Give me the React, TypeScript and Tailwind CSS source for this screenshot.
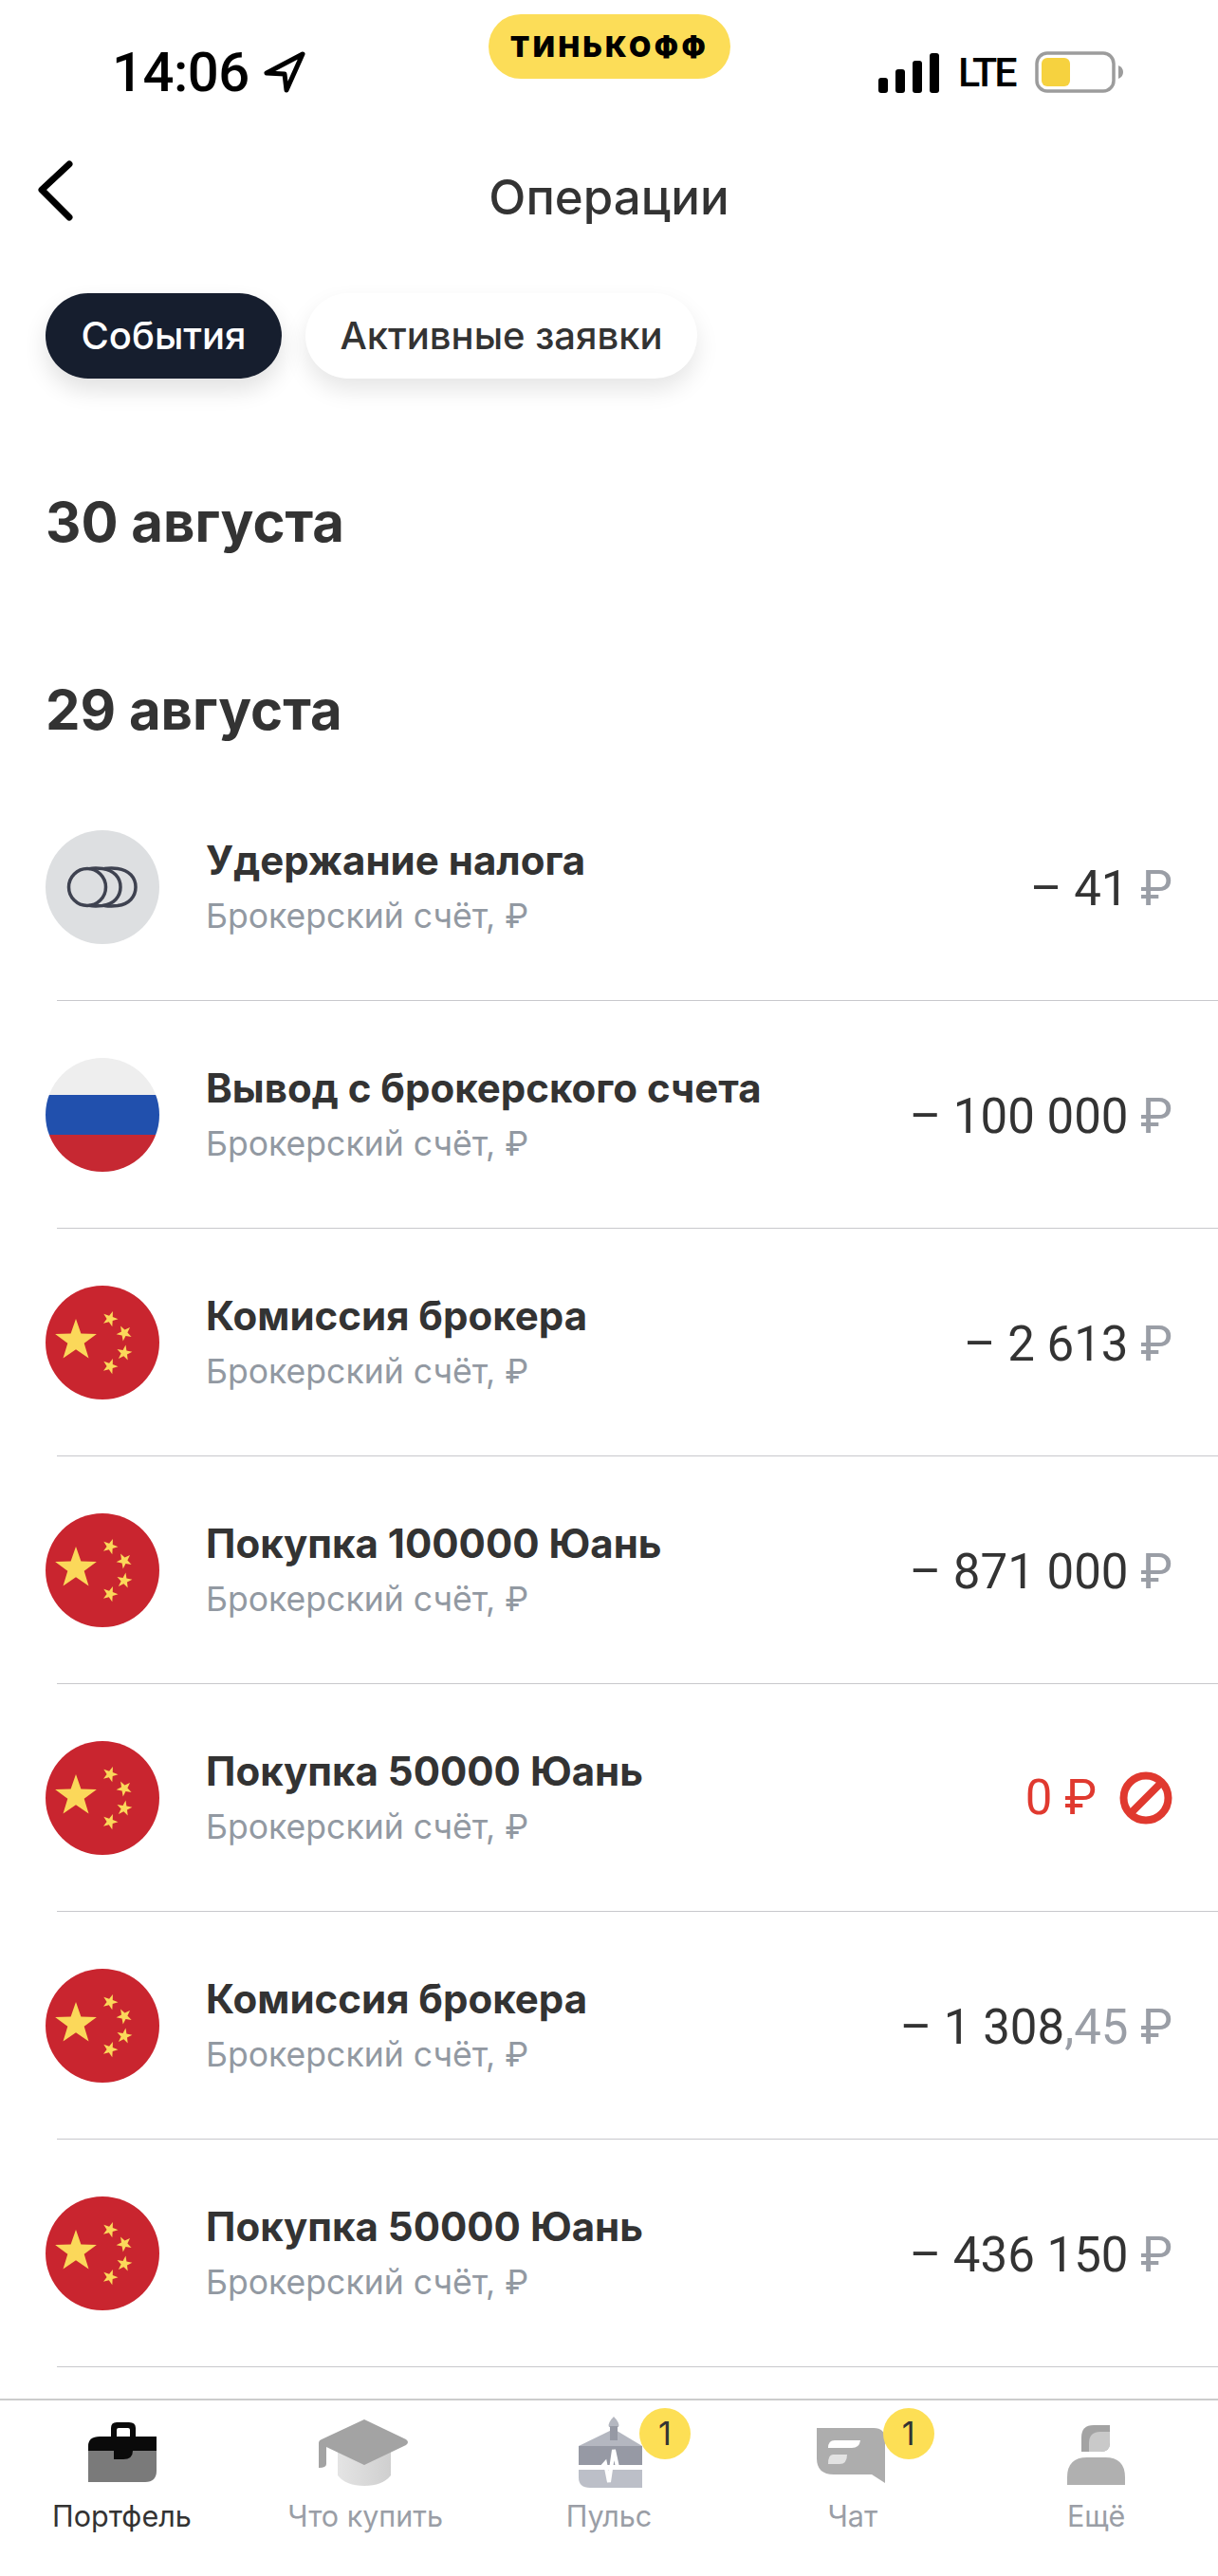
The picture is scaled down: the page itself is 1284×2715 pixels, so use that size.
const stars = (cx: number, cy: number, r: number, rot = 0) => {
  const pts: string[] = [];
  for (let i = 0; i < 10; i++) {
    const rad = i % 2 === 0 ? r : r * 0.4;
    const a = ((-90 + rot + i * 36) * Math.PI) / 180;
    pts.push(`${(cx + rad * Math.cos(a)).toFixed(1)},${(cy + rad * Math.sin(a)).toFixed(1)}`);
  }
  return pts.join(" ");
};

const ChinaFlag = () => (
  <svg width="120" height="120" viewBox="0 0 120 120" className="shrink-0">
    <circle cx="60" cy="60" r="60" fill="#c9252f" />
    <polygon points={stars(32, 58, 23)} fill="#fbd85a" />
    <polygon points={stars(68, 35, 8.5, 20)} fill="#fbd85a" />
    <polygon points={stars(83, 50, 8.5, 45)} fill="#fbd85a" />
    <polygon points={stars(83, 71, 8.5, 10)} fill="#fbd85a" />
    <polygon points={stars(68, 85, 8.5, 20)} fill="#fbd85a" />
  </svg>
);

const RussiaFlag = () => (
  <div className="w-[120px] h-[120px] rounded-full overflow-hidden shrink-0 flex flex-col">
    <div className="h-[39px] bg-[#eeeeee]" />
    <div className="h-[42px] bg-[#2150ad]" />
    <div className="h-[39px] bg-[#c62832]" />
  </div>
);

const CoinsIcon = () => (
  <svg width="120" height="120" viewBox="0 0 120 120" className="shrink-0">
    <circle cx="60" cy="60" r="60" fill="#dddfe1" />
    <g fill="none" stroke="#3e4250" strokeWidth="3.5">
      <circle cx="44" cy="60" r="19.5" />
      <path d="M46 40.6 C50 39.8 56 40 60 40.4 C72 42 79 50 79 60 C79 70 72 78 60 79.6 C56 80 50 80.2 46 79.4" />
      <path d="M62 40.6 C66 40 72 40 76 40.4 C88 42 95 50 95 60 C95 70 88 78 76 79.6 C72 80 66 80 62 79.4" />
    </g>
  </svg>
);

const BanIcon = () => (
  <svg width="56" height="56" viewBox="0 0 56 56" className="ml-[24px]">
    <circle cx="28" cy="28" r="23.5" fill="none" stroke="#e0392f" strokeWidth="8" />
    <path d="M12 44 L44 12" stroke="#e0392f" strokeWidth="8" />
  </svg>
);

const BriefcaseIcon = () => (
  <svg width="100" height="80" viewBox="0 0 100 80">
    <path d="M39 23 V14 Q39 8 45 8 H58 Q65 8 65 14 V23 H59 V16 Q59 14 57 14 H47 Q45 14 45 16 V23 Z" fill="#0a0a0a" />
    <path d="M15 38 V33 Q15 23 27 23 H87 V38 Z" fill="#0a0a0a" />
    <path d="M15 38 H87 V59 Q87 71 75 71 H15 Z" fill="#7a7a7a" />
    <path d="M42 38 H62 Q62 47 52 47 H42 Z" fill="#0a0a0a" />
  </svg>
);

const CapIcon = () => (
  <svg width="100" height="80" viewBox="0 0 100 80">
    <defs>
      <linearGradient id="capHead" x1="0" x2="1" y1="0" y2="0">
        <stop offset="0" stopColor="#e4e4e4" />
        <stop offset="1" stopColor="#cfcfcf" />
      </linearGradient>
    </defs>
    <path d="M21 30 H77 V64 Q68 75 49 75 Q30 75 21 64 Z" fill="url(#capHead)" />
    <path d="M49 5 L93 26 Q97 29 93 32 L49 53 L9 34 V52 Q9 56 1 56 V30 Q1 27 4 26 Z" fill="#a3a3a3" />
  </svg>
);

const PulseIcon = () => (
  <svg width="100" height="80" viewBox="0 0 100 80">
    <path d="M18 33 L55 15 L85 33 Z" fill="#b4b7c0" />
    <path d="M55 2 Q62 9 60 13 H50 Q48 9 55 2 Z" fill="#b4b7c0" />
    <rect x="51" y="12" width="8" height="15" fill="#9699a4" />
    <rect x="18" y="33" width="67" height="20" fill="#9699a4" />
    <path d="M18 58 H85 V77 H30 Q18 77 18 66 Z" fill="#bcbfc8" />
    <path d="M18 55.5 H42 L46 51 L50 71 L55 37 L59 55.5 H85" fill="none" stroke="#ffffff" strokeWidth="4" />
  </svg>
);

const ChatIcon = () => (
  <svg width="100" height="80" viewBox="0 0 100 80">
    <path d="M12 14 H72 Q84 14 84 26 V72 L70 63 H30 Q12 63 12 46 Z" fill="#adadad" />
    <path d="M31 27 H58 Q57 35 49 35 H24 Q24 27 31 27 Z" fill="#ffffff" />
    <path d="M29 42 H44 Q44 52 36 52 H24 Q24 42 29 42 Z" fill="#e2e2e2" />
  </svg>
);

const MoreIcon = () => (
  <svg width="100" height="80" viewBox="0 0 100 80">
    <path d="M64 11 V30 Q64 39 54 39 H34 V24 Q34 11 47 11 Z" fill="#a3a3a3" />
    <path d="M64 18 V30 Q64 39 54 39 H42 V30 Q42 18 54 18 Z" fill="#c9c9c9" />
    <path d="M19 74 V66 Q19 45 40 45 H59 Q80 45 80 66 V74 Z" fill="#b0b0b0" />
  </svg>
);

const Badge = () => (
  <span className="absolute left-[82px] top-[-7px] w-[54px] h-[54px] rounded-full bg-[#fddf55] flex items-center justify-center text-[34px] text-[#333333] leading-none">
    1
  </span>
);

const Rub = () => <span className="text-[#9a9ea6]">₽</span>;

const rows = [
  { title: "Удержание налога", icon: <CoinsIcon />, amount: "– 41" },
  { title: "Вывод с брокерского счета", icon: <RussiaFlag />, amount: "– 100 000" },
  { title: "Комиссия брокера", icon: <ChinaFlag />, amount: "– 2 613" },
  { title: "Покупка 100000 Юань", icon: <ChinaFlag />, amount: "– 871 000" },
  { title: "Покупка 50000 Юань", icon: <ChinaFlag />, amount: "0", failed: true },
  { title: "Комиссия брокера", icon: <ChinaFlag />, amount: "– 1 308", cents: ",45" },
  { title: "Покупка 50000 Юань", icon: <ChinaFlag />, amount: "– 436 150" },
];

const tabs = [
  { label: "Портфель", icon: <BriefcaseIcon />, active: true },
  { label: "Что купить", icon: <CapIcon /> },
  { label: "Пульс", icon: <PulseIcon />, badge: true },
  { label: "Чат", icon: <ChatIcon />, badge: true },
  { label: "Ещё", icon: <MoreIcon /> },
];

export default function App() {
  return (
    <div className="w-[1284px] h-[2715px] bg-white flex flex-col overflow-hidden font-[Inter,sans-serif] text-[#333333]">
      <div className="flex h-[140px] shrink-0 items-start font-[Roboto,sans-serif]">
        <div className="w-[515px] pl-[118px] pt-[45px] flex items-center text-black">
          <span className="text-[58px] font-medium leading-[62px] tracking-[-0.5px]">14:06</span>
          <svg width="46" height="46" viewBox="0 0 46 46" className="ml-[14px]">
            <path d="M42 4 L4 24 L23 25 L25 42 Z" fill="none" stroke="#000000" strokeWidth="5" strokeLinejoin="round" />
          </svg>
        </div>
        <div className="w-[255px] h-[68px] mt-[15px] rounded-[34px] bg-[#fcdd58] flex items-center justify-center">
          <span className="text-[30px] font-black text-black tracking-[3.5px] leading-none font-[Inter,sans-serif]">ТИНЬКОФФ</span>
        </div>
        <div className="flex-1 pl-[156px] pt-[54px] flex items-center">
          <svg width="66" height="44" viewBox="0 0 66 44">
            <rect x="0" y="28" width="10" height="16" rx="3" fill="#000000" />
            <rect x="18" y="19" width="10" height="25" rx="3" fill="#000000" />
            <rect x="36" y="10" width="10" height="34" rx="3" fill="#000000" />
            <rect x="54" y="2" width="10" height="42" rx="3" fill="#000000" />
          </svg>
          <span className="ml-[18px] text-[43px] font-medium text-black tracking-[-3px] leading-none">LTE</span>
          <svg width="96" height="44" viewBox="0 0 96 44" className="ml-[22px]">
            <rect x="2" y="2" width="81" height="40" rx="11" fill="none" stroke="#9c9c9c" strokeWidth="3.5" />
            <rect x="7" y="7" width="30" height="30" rx="6" fill="#f6d23f" />
            <path d="M88 15 Q93 17 93 22 Q93 27 88 29 Z" fill="#9c9c9c" />
          </svg>
        </div>
      </div>

      <div className="grid grid-cols-[1fr_auto_1fr] items-center h-[130px] shrink-0">
        <svg width="80" height="70" viewBox="0 0 80 70" className="ml-[20px] mt-[-6px]">
          <path d="M53 6 L24 33 L53 62" fill="none" stroke="#000000" strokeWidth="7" strokeLinecap="round" strokeLinejoin="round" />
        </svg>
        <h1 className="text-[51px] font-medium leading-none mt-[4px]">Операции</h1>
        <div />
      </div>

      <div className="flex gap-[25px] pl-[48px] mt-[39px] shrink-0">
        <div className="h-[90px] w-[249px] rounded-[45px] bg-[#161e2e] text-white text-[40px] font-medium flex items-center justify-center shadow-[0_12px_24px_rgba(0,0,0,0.12)]">
          События
        </div>
        <div className="h-[90px] w-[413px] rounded-[45px] bg-white text-[40px] font-medium flex items-center justify-center shadow-[0_12px_24px_rgba(0,0,0,0.1)]">
          Активные заявки
        </div>
      </div>

      <h2 className="pl-[48px] mt-[116px] text-[58px] font-bold leading-[70px] shrink-0">30 августа</h2>
      <h2 className="pl-[48px] mt-[128px] text-[58px] font-bold leading-[70px] shrink-0">29 августа</h2>

      <div className="mt-[32px] flex-1 min-h-0 overflow-hidden">
        {rows.map((r, i) => (
          <div key={i}>
            <div className="h-[239px] pl-[48px] pr-[48px] flex items-center">
              {r.icon}
              <div className="ml-[49px] flex-1 min-w-0">
                <div className="text-[42px] font-bold leading-[48px]">{r.title}</div>
                <div className="text-[35.6px] text-[#9299a2] leading-[42px] mt-[14px]">Брокерский счёт, ₽</div>
              </div>
              {r.failed ? (
                <div className="flex items-center text-[#e0392f] text-[51px] leading-none font-[Roboto,sans-serif]">
                  <span>0 ₽</span>
                  <BanIcon />
                </div>
              ) : (
                <div className="text-[51px] leading-none whitespace-nowrap font-[Roboto,sans-serif] mt-[3px]">
                  {r.amount}
                  {r.cents && <span className="text-[#9a9ea6]">{r.cents}</span>} <Rub />
                </div>
              )}
            </div>
            <div className="h-px ml-[60px] bg-[#c8c8cc]" />
          </div>
        ))}
      </div>

      <div className="h-[187px] shrink-0 border-t-2 border-[#cccccc] bg-white grid grid-cols-5">
        {tabs.map((t) => (
          <div key={t.label} className="flex flex-col items-center pt-[15px]">
            <div className="relative w-[100px] h-[80px]">
              {t.icon}
              {t.badge && <Badge />}
            </div>
            <span className={`mt-[9px] text-[30.5px] leading-[36px] ${t.active ? "text-[#333333]" : "text-[#9a9ea6]"}`}>{t.label}</span>
          </div>
        ))}
      </div>
    </div>
  );
}
